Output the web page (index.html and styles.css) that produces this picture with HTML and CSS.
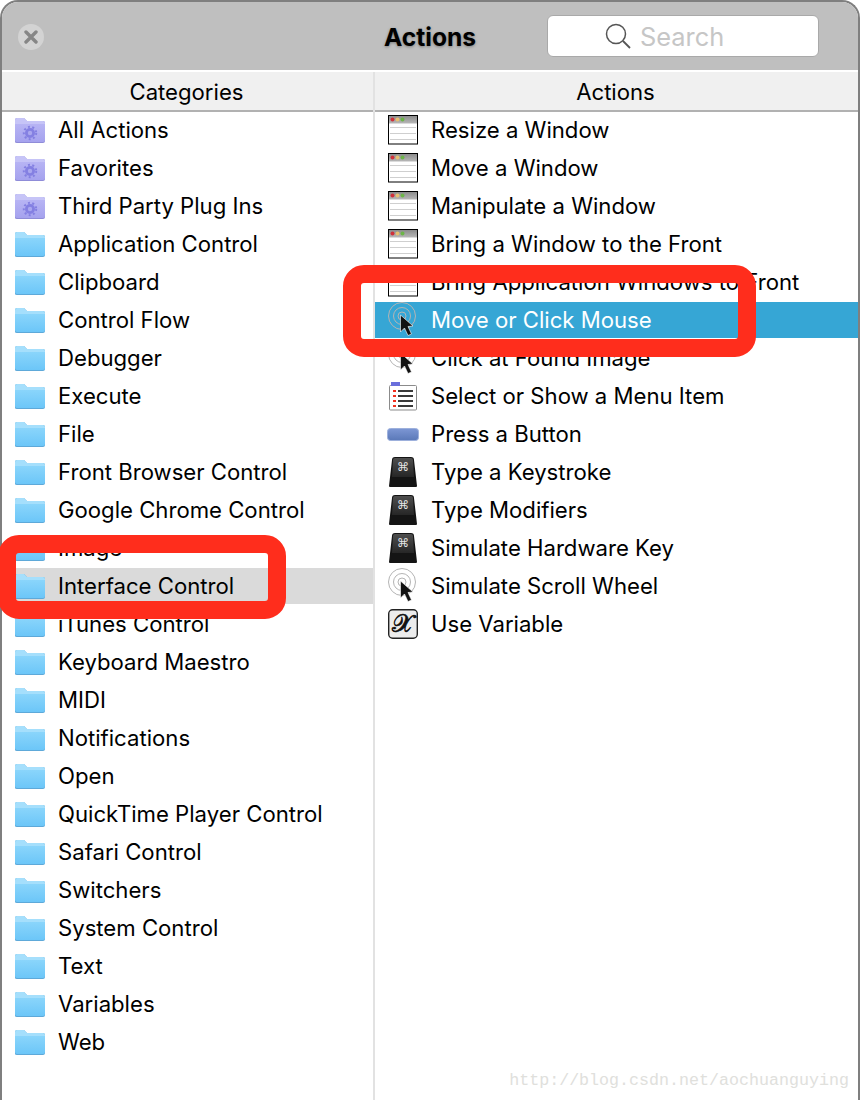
FILE: index.html
```html
<!DOCTYPE html>
<html lang="en">
<head>
    <meta charset="UTF-8">
    <title>Actions</title>
    <link rel="stylesheet" href="styles.css">
</head>
<body>
<svg class="defs" width="0" height="0">
    <defs>
        <linearGradient id="grad-blue" x1="0" y1="0" x2="0" y2="1">
            <stop offset="0" stop-color="#8ad5fb"/>
            <stop offset="1" stop-color="#6cc6f8"/>
        </linearGradient>
        <linearGradient id="grad-purple" x1="0" y1="0" x2="0" y2="1">
            <stop offset="0" stop-color="#b7b4f4"/>
            <stop offset="1" stop-color="#a5a2ee"/>
        </linearGradient>
        <linearGradient id="grad-bar" x1="0" y1="0" x2="0" y2="1">
            <stop offset="0" stop-color="#8c8c8c"/>
            <stop offset="1" stop-color="#b8b8b8"/>
        </linearGradient>
        <linearGradient id="grad-btn" x1="0" y1="0" x2="0" y2="1">
            <stop offset="0" stop-color="#7d97d4"/>
            <stop offset="1" stop-color="#5a78b8"/>
        </linearGradient>
        <linearGradient id="grad-key" x1="0" y1="0" x2="0" y2="1">
            <stop offset="0" stop-color="#4e4e4e"/>
            <stop offset="1" stop-color="#262626"/>
        </linearGradient>

        <symbol id="folder" viewBox="0 0 30 25">
            <path d="M0 24V2Q0 0 2 0H9L12 3H28Q30 3 30 5V23Q30 25 28 25H2Q0 25 0 24Z" fill="#5ea9d9"/>
            <path d="M0 6V2Q0 0 2 0H9L12 3H28Q30 3 30 5V6Z" fill="#a5dffc"/>
            <path d="M0 6H30V22Q30 24 28 24H2Q0 24 0 22Z" fill="url(#grad-blue)"/>
        </symbol>
        <symbol id="folder-gear" viewBox="0 0 30 25">
            <path d="M0 24V2Q0 0 2 0H9L12 3H28Q30 3 30 5V23Q30 25 28 25H2Q0 25 0 24Z" fill="#8f8cd8"/>
            <path d="M0 6V2Q0 0 2 0H9L12 3H28Q30 3 30 5V6Z" fill="#c6c4f7"/>
            <path d="M0 6H30V22Q30 24 28 24H2Q0 24 0 22Z" fill="url(#grad-purple)"/>
            <circle cx="15" cy="15" r="5" fill="#8480e2"/>
            <circle cx="15" cy="15" r="6.2" fill="none" stroke="#8480e2" stroke-width="2" stroke-dasharray="2 2.4"/>
            <circle cx="15" cy="15" r="2.2" fill="#aaa7ef"/>
        </symbol>
        <symbol id="win" viewBox="0 0 30 30">
            <rect x=".5" y=".5" width="29" height="28.500" fill="#fff" stroke="#000"/>
            <rect x="1" y="1" width="28" height="7.500" fill="url(#grad-bar)"/>
            <circle cx="4.500" cy="4.500" r="2" fill="#d0303a"/>
            <circle cx="9.500" cy="4.500" r="2" fill="#e6c070"/>
            <circle cx="14.500" cy="4.500" r="2" fill="#6cb548"/>
            <path d="M2 12.500H28M2 18.500H28M2 24.500H28" stroke="#cfcfcf" stroke-width="1"/>
        </symbol>
        <symbol id="target" viewBox="0 0 30 36">
            <g fill="none" stroke="#b4b4b4" stroke-width="1">
                <circle cx="14" cy="14" r="13.500"/>
                <circle cx="14" cy="14" r="8.500"/>
                <circle cx="14" cy="14" r="4"/>
            </g>
            <path d="M12.500 13L12.500 30L16.500 26L20 33.500L23.500 32L20 24.500L25 24Z" fill="#111" stroke="#fff" stroke-width=".6"/>
        </symbol>
        <symbol id="menu" viewBox="0 0 30 30">
            <rect x="1.500" y="4.500" width="27" height="24.500" rx="1" fill="#fff" stroke="#8b8b8b"/>
            <rect x="3" y="1" width="9" height="4" fill="#6a6fdc"/>
            <path d="M5 10H8M5 15H8M5 20H8M5 25H8" stroke="#f03020" stroke-width="2"/>
            <path d="M10 10H25M10 15H25M10 20H25M10 25H25" stroke="#3a3a3a" stroke-width="2"/>
        </symbol>
        <symbol id="press" viewBox="0 0 32 13">
            <rect x=".5" y=".5" width="31" height="12" rx="3" fill="url(#grad-btn)" stroke="#9db0dc"/>
        </symbol>
        <symbol id="key" viewBox="0 0 28 30">
            <path d="M0 29L3 3Q3 0 6 0H22Q25 0 25 3L28 29Q28 30 27 30H1Q0 30 0 29Z" fill="#141414"/>
            <path d="M3 20L4 3Q4 1 6 1H22Q24 1 24 3L25 20Z" fill="url(#grad-key)"/>
            <text x="14" y="14" class="key-glyph">⌘</text>
        </symbol>
        <symbol id="variable" viewBox="0 0 30 30">
            <rect x=".7" y=".7" width="28.600" height="28.600" rx="4" fill="#ececec" stroke="#222" stroke-width="1.400"/>
            <text x="15" y="23" class="var-glyph">𝒳</text>
        </symbol>
    </defs>
</svg>

<div class="window">
    <div class="titlebar">
        <div class="close">
            <svg width="14" height="14" viewBox="0 0 14 14"><path d="M2 2L12 12M12 2L2 12" stroke="#868686" stroke-width="3.400" stroke-linecap="round"/></svg>
        </div>
        <div class="title">Actions</div>
        <div class="search">
            <svg width="26" height="26" viewBox="0 0 26 26"><circle cx="11" cy="11" r="9.500" fill="none" stroke="#555" stroke-width="1.500"/><path d="M18 18L25 25" stroke="#555" stroke-width="1.800"/></svg>
            <span>Search</span>
        </div>
    </div>

    <div class="columns">
        <div class="col col-left">
            <div class="col-head">Categories</div>
            <div class="row"><svg class="ico-folder"><use href="#folder-gear"/></svg>All Actions</div>
            <div class="row"><svg class="ico-folder"><use href="#folder-gear"/></svg>Favorites</div>
            <div class="row"><svg class="ico-folder"><use href="#folder-gear"/></svg>Third Party Plug Ins</div>
            <div class="row"><svg class="ico-folder"><use href="#folder"/></svg>Application Control</div>
            <div class="row"><svg class="ico-folder"><use href="#folder"/></svg>Clipboard</div>
            <div class="row"><svg class="ico-folder"><use href="#folder"/></svg>Control Flow</div>
            <div class="row"><svg class="ico-folder"><use href="#folder"/></svg>Debugger</div>
            <div class="row"><svg class="ico-folder"><use href="#folder"/></svg>Execute</div>
            <div class="row"><svg class="ico-folder"><use href="#folder"/></svg>File</div>
            <div class="row"><svg class="ico-folder"><use href="#folder"/></svg>Front Browser Control</div>
            <div class="row"><svg class="ico-folder"><use href="#folder"/></svg>Google Chrome Control</div>
            <div class="row"><svg class="ico-folder"><use href="#folder"/></svg>Image</div>
            <div class="row row-grey"><svg class="ico-folder"><use href="#folder"/></svg>Interface Control</div>
            <div class="row"><svg class="ico-folder"><use href="#folder"/></svg>iTunes Control</div>
            <div class="row"><svg class="ico-folder"><use href="#folder"/></svg>Keyboard Maestro</div>
            <div class="row"><svg class="ico-folder"><use href="#folder"/></svg>MIDI</div>
            <div class="row"><svg class="ico-folder"><use href="#folder"/></svg>Notifications</div>
            <div class="row"><svg class="ico-folder"><use href="#folder"/></svg>Open</div>
            <div class="row"><svg class="ico-folder"><use href="#folder"/></svg>QuickTime Player Control</div>
            <div class="row"><svg class="ico-folder"><use href="#folder"/></svg>Safari Control</div>
            <div class="row"><svg class="ico-folder"><use href="#folder"/></svg>Switchers</div>
            <div class="row"><svg class="ico-folder"><use href="#folder"/></svg>System Control</div>
            <div class="row"><svg class="ico-folder"><use href="#folder"/></svg>Text</div>
            <div class="row"><svg class="ico-folder"><use href="#folder"/></svg>Variables</div>
            <div class="row"><svg class="ico-folder"><use href="#folder"/></svg>Web</div>
        </div>
        <div class="col col-right">
            <div class="col-head">Actions</div>
            <div class="row"><span class="slot"><svg class="ico-win"><use href="#win"/></svg></span>Resize a Window</div>
            <div class="row"><span class="slot"><svg class="ico-win"><use href="#win"/></svg></span>Move a Window</div>
            <div class="row"><span class="slot"><svg class="ico-win"><use href="#win"/></svg></span>Manipulate a Window</div>
            <div class="row"><span class="slot"><svg class="ico-win"><use href="#win"/></svg></span>Bring a Window to the Front</div>
            <div class="row"><span class="slot"><svg class="ico-win"><use href="#win"/></svg></span>Bring Application Windows to Front</div>
            <div class="row row-blue"><span class="slot"><svg class="ico-target"><use href="#target"/></svg></span>Move or Click Mouse</div>
            <div class="row"><span class="slot"><svg class="ico-target"><use href="#target"/></svg></span>Click at Found Image</div>
            <div class="row"><span class="slot"><svg class="ico-menu"><use href="#menu"/></svg></span>Select or Show a Menu Item</div>
            <div class="row"><span class="slot"><svg class="ico-press"><use href="#press"/></svg></span>Press a Button</div>
            <div class="row"><span class="slot"><svg class="ico-key"><use href="#key"/></svg></span>Type a Keystroke</div>
            <div class="row"><span class="slot"><svg class="ico-key"><use href="#key"/></svg></span>Type Modifiers</div>
            <div class="row"><span class="slot"><svg class="ico-key"><use href="#key"/></svg></span>Simulate Hardware Key</div>
            <div class="row"><span class="slot"><svg class="ico-target"><use href="#target"/></svg></span>Simulate Scroll Wheel</div>
            <div class="row"><span class="slot"><svg class="ico-win"><use href="#variable"/></svg></span>Use Variable</div>
        </div>
    </div>

    <div class="mark mark-mouse"></div>
    <div class="mark mark-iface"></div>
    <div class="watermark">http://blog.csdn.net/aochuanguying</div>
</div>
</body>
</html>
```

FILE: styles.css
```css
body {
    margin: 0;
    background-color: #fff;
    font-family: Inter, "Noto Sans", sans-serif;
    color: #000;
    overflow: hidden;
}
.defs { position: absolute; }

.window {
    position: relative;
    width: 860px;
    height: 1100px;
    box-sizing: border-box;
    display: flex;
    flex-direction: column;
    border: solid #7f7f7f;
    border-width: 2px 2px 0 2px;
    border-radius: 18px 18px 0 0;
}

/* title bar */
.titlebar {
    height: 68px;
    flex: none;
    display: grid;
    grid-template-columns: 1fr auto 1fr;
    align-items: center;
    background-color: #bfbfbf;
    border-bottom: 2px solid #fff;
    border-radius: 16px 16px 0 0;
}
.close {
    width: 26px;
    height: 26px;
    margin: 2px 0 0 16px;
    border-radius: 50%;
    background-color: #d3d3d3;
    display: flex;
    align-items: center;
    justify-content: center;
}
.title {
    margin-top: 2px;
    font-size: 24.600px;
    font-weight: 700;
    text-shadow: 0 1px 3px rgba(0, 0, 0, .35);
}
.search {
    justify-self: end;
    width: 272px;
    height: 42px;
    margin-right: 39px;
    padding-left: 57px;
    box-sizing: border-box;
    display: flex;
    align-items: center;
    gap: 9px;
    background-color: #fff;
    border: 1px solid #a9a9a9;
    border-radius: 6px;
    font-size: 25.400px;
    color: #c6c6c6;
}

/* the two lists */
.columns {
    flex: 1;
    display: flex;
}
.col {
    display: flex;
    flex-direction: column;
    gap: 2px;
}
.col-left {
    width: 371px;
    flex: none;
    border-right: 2px solid #e2e2e2;
}
.col-right {
    flex: 1;
}
.col-head {
    height: 36px;
    margin-bottom: -2px;
    padding: 2px 2px 0 0;
    flex: none;
    display: flex;
    align-items: center;
    justify-content: center;
    background-color: #f0f0f0;
    border-bottom: 2px solid #b1b1b1;
    font-size: 22.150px;
}
.row {
    height: 36px;
    flex: none;
    display: flex;
    align-items: center;
    font-size: 22.150px;
    white-space: nowrap;
}
.col-left .row { padding-left: 13px; }
.col-left .row svg { margin-right: 13px; }
.row-grey { background-color: #dadada; }
.row-blue { background-color: #36a6d5; color: #fff; }

.slot {
    width: 56px;
    height: 36px;
    flex: none;
    display: flex;
    align-items: center;
    justify-content: center;
}
.ico-folder { width: 30px; height: 25px; flex: none; }
.ico-win { width: 30px; height: 30px; }
.ico-target { width: 30px; height: 36px; }
.ico-menu { width: 30px; height: 30px; }
.ico-press { width: 32px; height: 13px; }
.ico-key { width: 28px; height: 30px; }

.key-glyph {
    font-family: "DejaVu Sans", sans-serif;
    font-size: 12px;
    fill: #e4e4e4;
    text-anchor: middle;
}
.var-glyph {
    font-family: "DejaVu Serif", "DejaVu Sans", "Liberation Serif", serif;
    font-size: 25px;
    fill: #111;
    stroke: #111;
    stroke-width: .7px;
    text-anchor: middle;
}

/* red annotations drawn on top of the screenshot */
.mark {
    position: absolute;
    box-sizing: border-box;
    border: 18px solid #ff2d1c;
    border-radius: 21px;
}
.mark-mouse {
    left: 341px;
    top: 263px;
    width: 413px;
    height: 92px;
}
.mark-iface {
    left: -4px;
    top: 533px;
    width: 288px;
    height: 84px;
}
.watermark {
    position: absolute;
    right: 9px;
    top: 1069px;
    font-family: "Liberation Mono", monospace;
    font-size: 16.670px;
    color: #e0e0dc;
}
```
